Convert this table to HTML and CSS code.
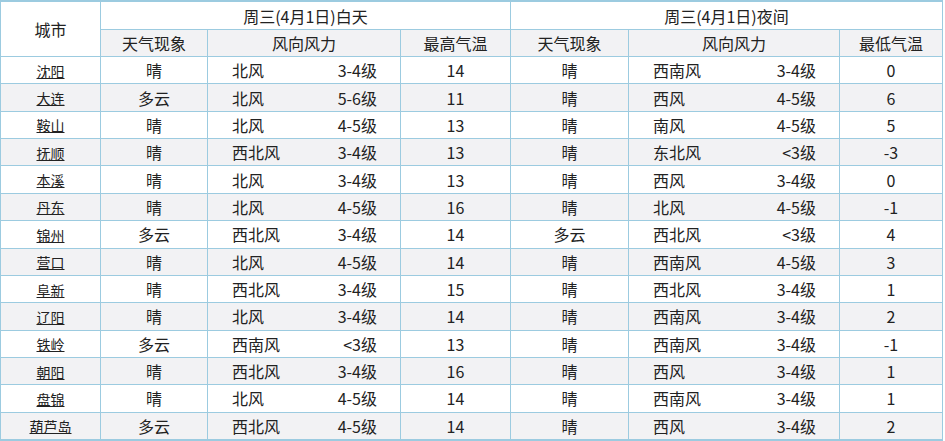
FILE: index.html
```html
<!DOCTYPE html>
<html lang="zh-CN">
<head>
<meta charset="utf-8">
<title>辽宁天气预报</title>
<link rel="stylesheet" href="styles.css">
</head>
<body>
<table class="weather">
  <colgroup>
    <col class="c-city"><col class="c-wx1"><col class="c-wind1"><col class="c-hi">
    <col class="c-wx2"><col class="c-wind2"><col class="c-lo">
  </colgroup>
  <thead>
    <tr class="h1">
      <th rowspan="2">城市</th>
      <th colspan="3">周三(4月1日)白天</th>
      <th colspan="3">周三(4月1日)夜间</th>
    </tr>
    <tr class="h2">
      <th>天气现象</th><th>风向风力</th><th>最高气温</th>
      <th>天气现象</th><th>风向风力</th><th>最低气温</th>
    </tr>
  </thead>
  <tbody>
    <tr><td><a href="#">沈阳</a></td><td>晴</td><td><div class="wind"><span>北风</span><span>3-4级</span></div></td><td>14</td><td>晴</td><td><div class="wind"><span>西南风</span><span>3-4级</span></div></td><td>0</td></tr>
    <tr><td><a href="#">大连</a></td><td>多云</td><td><div class="wind"><span>北风</span><span>5-6级</span></div></td><td>11</td><td>晴</td><td><div class="wind"><span>西风</span><span>4-5级</span></div></td><td>6</td></tr>
    <tr><td><a href="#">鞍山</a></td><td>晴</td><td><div class="wind"><span>北风</span><span>4-5级</span></div></td><td>13</td><td>晴</td><td><div class="wind"><span>南风</span><span>4-5级</span></div></td><td>5</td></tr>
    <tr><td><a href="#">抚顺</a></td><td>晴</td><td><div class="wind"><span>西北风</span><span>3-4级</span></div></td><td>13</td><td>晴</td><td><div class="wind"><span>东北风</span><span>&lt;3级</span></div></td><td>-3</td></tr>
    <tr><td><a href="#">本溪</a></td><td>晴</td><td><div class="wind"><span>北风</span><span>3-4级</span></div></td><td>13</td><td>晴</td><td><div class="wind"><span>西风</span><span>3-4级</span></div></td><td>0</td></tr>
    <tr><td><a href="#">丹东</a></td><td>晴</td><td><div class="wind"><span>北风</span><span>4-5级</span></div></td><td>16</td><td>晴</td><td><div class="wind"><span>北风</span><span>4-5级</span></div></td><td>-1</td></tr>
    <tr><td><a href="#">锦州</a></td><td>多云</td><td><div class="wind"><span>西北风</span><span>3-4级</span></div></td><td>14</td><td>多云</td><td><div class="wind"><span>西北风</span><span>&lt;3级</span></div></td><td>4</td></tr>
    <tr><td><a href="#">营口</a></td><td>晴</td><td><div class="wind"><span>北风</span><span>4-5级</span></div></td><td>14</td><td>晴</td><td><div class="wind"><span>西南风</span><span>4-5级</span></div></td><td>3</td></tr>
    <tr><td><a href="#">阜新</a></td><td>晴</td><td><div class="wind"><span>西北风</span><span>3-4级</span></div></td><td>15</td><td>晴</td><td><div class="wind"><span>西北风</span><span>3-4级</span></div></td><td>1</td></tr>
    <tr><td><a href="#">辽阳</a></td><td>晴</td><td><div class="wind"><span>北风</span><span>3-4级</span></div></td><td>14</td><td>晴</td><td><div class="wind"><span>西南风</span><span>3-4级</span></div></td><td>2</td></tr>
    <tr><td><a href="#">铁岭</a></td><td>多云</td><td><div class="wind"><span>西南风</span><span>&lt;3级</span></div></td><td>13</td><td>晴</td><td><div class="wind"><span>西南风</span><span>3-4级</span></div></td><td>-1</td></tr>
    <tr><td><a href="#">朝阳</a></td><td>晴</td><td><div class="wind"><span>西北风</span><span>3-4级</span></div></td><td>16</td><td>晴</td><td><div class="wind"><span>西风</span><span>3-4级</span></div></td><td>1</td></tr>
    <tr><td><a href="#">盘锦</a></td><td>晴</td><td><div class="wind"><span>北风</span><span>4-5级</span></div></td><td>14</td><td>晴</td><td><div class="wind"><span>西南风</span><span>3-4级</span></div></td><td>1</td></tr>
    <tr><td><a href="#">葫芦岛</a></td><td>多云</td><td><div class="wind"><span>西北风</span><span>4-5级</span></div></td><td>14</td><td>晴</td><td><div class="wind"><span>西风</span><span>3-4级</span></div></td><td>2</td></tr>
  </tbody>
</table>
</body>
</html>
```

FILE: styles.css
```css
html, body {
  margin: 0;
  padding: 0;
  background: #ffffff;
}

.weather {
  border-collapse: collapse;
  table-layout: fixed;
  width: 943px;
  font-family: "Noto Sans CJK SC", "Noto Sans", sans-serif;
  font-size: 16px;
  color: #222222;
  border-top: 2px solid #9ccbe0;
  border-bottom: 2px solid #9ccbe0;
  border-left: 1px solid #9ccbe0;
  border-right: 1px solid #9ccbe0;
}

.c-city { width: 100px; }
.c-wx1 { width: 107px; }
.c-wind1 { width: 193px; }
.c-hi { width: 110px; }
.c-wx2 { width: 118px; }
.c-wind2 { width: 211px; }
.c-lo { width: 103px; }

.weather th,
.weather td {
  border: 1px solid #9ccbe0;
  padding: 0;
  text-align: center;
  vertical-align: middle;
  font-weight: normal;
  line-height: 20px;
}

.h1 th {
  height: 27px;
  background: #ffffff;
}

.h2 th {
  height: 26px;
  background: #f2f2f4;
}

.weather tbody td {
  height: 26.36px;
}

.weather tbody tr:nth-child(odd) td {
  background: #ffffff;
}

.weather tbody tr:nth-child(even) td {
  background: #f2f2f4;
}

.weather a {
  color: #222222;
  font-size: 14px;
  text-decoration: underline;
}

.wind {
  display: flex;
  justify-content: space-between;
  padding: 0 23px 0 24px;
}
```
